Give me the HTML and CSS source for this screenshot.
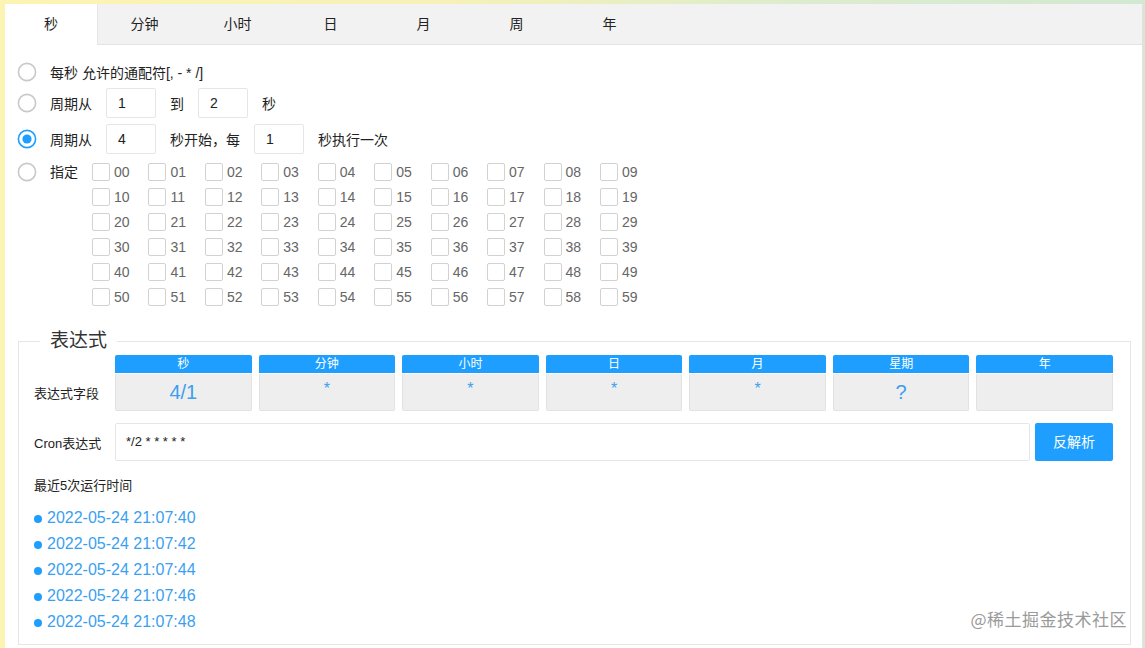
FILE: index.html
```html
<!DOCTYPE html>
<html lang="zh">
<head>
<meta charset="utf-8">
<title>Cron</title>
<link rel="stylesheet" href="styles.css">
</head>
<body>
<div class="panel">
  <ul class="tabs">
    <li class="tab active">秒</li>
    <li class="tab">分钟</li>
    <li class="tab">小时</li>
    <li class="tab">日</li>
    <li class="tab">月</li>
    <li class="tab">周</li>
    <li class="tab">年</li>
  </ul>

  <div class="options">
    <div class="row r1">
      <span class="radio"><svg viewBox="0 0 20 20" width="20" height="20"><circle cx="10" cy="10" r="8.6" fill="#fff" stroke="#c9c9c9" stroke-width="1.6"/></svg></span>
      <span class="txt">每秒 允许的通配符[, - * /]</span>
    </div>
    <div class="row r2">
      <span class="radio"><svg viewBox="0 0 20 20" width="20" height="20"><circle cx="10" cy="10" r="8.6" fill="#fff" stroke="#c9c9c9" stroke-width="1.6"/></svg></span>
      <span class="txt">周期从</span>
      <span class="inp">1</span>
      <span class="txt">到</span>
      <span class="inp">2</span>
      <span class="txt">秒</span>
    </div>
    <div class="row r3">
      <span class="radio"><svg viewBox="0 0 20 20" width="20" height="20"><circle cx="10" cy="10" r="8.6" fill="#fff" stroke="#1e9fff" stroke-width="1.6"/><circle cx="10" cy="10" r="4.6" fill="#1e9fff"/></svg></span>
      <span class="txt">周期从</span>
      <span class="inp">4</span>
      <span class="txt">秒开始，每</span>
      <span class="inp">1</span>
      <span class="txt">秒执行一次</span>
    </div>
    <div class="row r4">
      <span class="radio"><svg viewBox="0 0 20 20" width="20" height="20"><circle cx="10" cy="10" r="8.6" fill="#fff" stroke="#c9c9c9" stroke-width="1.6"/></svg></span>
      <span class="txt spec">指定</span>
      <div class="checks" id="checks"></div>
    </div>
  </div>

  <fieldset class="expr">
    <legend>表达式</legend>
    <div class="fields">
      <div class="flabel">表达式字段</div>
      <div class="col"><div class="ch">秒</div><div class="cv big">4/1</div></div>
      <div class="col"><div class="ch">分钟</div><div class="cv star">*</div></div>
      <div class="col"><div class="ch">小时</div><div class="cv star">*</div></div>
      <div class="col"><div class="ch">日</div><div class="cv star">*</div></div>
      <div class="col"><div class="ch">月</div><div class="cv star">*</div></div>
      <div class="col"><div class="ch">星期</div><div class="cv big">?</div></div>
      <div class="col"><div class="ch">年</div><div class="cv"></div></div>
    </div>
    <div class="cron">
      <div class="flabel">Cron表达式</div>
      <div class="cinput">*/2 * * * * *</div>
      <div class="btn">反解析</div>
    </div>
    <div class="recent">最近5次运行时间</div>
    <ul class="times">
      <li>2022-05-24 21:07:40</li>
      <li>2022-05-24 21:07:42</li>
      <li>2022-05-24 21:07:44</li>
      <li>2022-05-24 21:07:46</li>
      <li>2022-05-24 21:07:48</li>
    </ul>
  </fieldset>
  <div class="watermark">@稀土掘金技术社区</div>
</div>
<script>
  var c = document.getElementById('checks');
  var h = '';
  for (var i = 0; i < 60; i++) {
    var n = (i < 10 ? '0' : '') + i;
    h += '<label class="ck"><span class="box"></span><span class="num">' + n + '</span></label>';
  }
  c.innerHTML = h;
</script>
</body>
</html>
```

FILE: styles.css
```css
* { box-sizing: border-box; }
html, body { margin: 0; padding: 0; height: 100%; }
body {
  background: linear-gradient(90deg, #fcf4b2 0%, #f5f1b8 40%, #dcecce 70%, #d3e8d2 100%);
  font-family: "Liberation Sans", "Noto Sans CJK SC", sans-serif;
  color: #222;
  font-size: 14px;
  overflow: hidden;
}
.panel {
  position: relative;
  margin: 4px 0 0 5px;
  width: 1138px;
  height: 644px;
  background: #fff;
  border-right: 1px solid #e2e2e2;
}
.tabs {
  display: flex;
  margin: 0;
  padding: 0;
  list-style: none;
  height: 41px;
  background: #f2f2f2;
  border-bottom: 1px solid #e4e4e4;
}
.tab {
  width: 93px;
  text-align: center;
  line-height: 40px;
  font-size: 14px;
  color: #222;
}
.tab.active {
  background: #fff;
  height: 41px;
  border-right: 1px solid #e6e6e6;
}
.options { padding: 12px 0 0 12px; }
.row {
  display: flex;
  align-items: center;
  height: 30px;
}
.r2 { margin-top: 1px; }
.r3 { margin-top: 6px; }
.r4 { margin-top: 5px; align-items: flex-start; height: auto; }
.radio {
  width: 20px;
  height: 20px;
  display: flex;
  margin-right: 13px;
}
.r4 .radio { margin-top: 3px; }
.txt { white-space: nowrap; }
.inp {
  width: 50px;
  height: 30px;
  border: 1px solid #e6e6e6;
  border-radius: 2px;
  padding-left: 11px;
  line-height: 28px;
  margin: 0 14px;
  color: #222;
}
.spec { margin-right: 14px; line-height: 26px; }
.checks {
  display: grid;
  grid-template-columns: repeat(10, 56.45px);
  grid-auto-rows: 25px;
}
.ck { display: flex; align-items: center; }
.box {
  width: 18px;
  height: 18px;
  border: 1px solid #d2d2d2;
  border-radius: 2px;
  background: #fff;
  margin-right: 4px;
}
.num { color: #666; font-size: 14px; }

.expr {
  margin: 20px 11px 0 13px;
  border: 1px solid #e6e6e6;
  padding: 2px 17px 10px 15px;
  min-width: 0;
  height: 316px;
}
.expr legend {
  margin-left: 6px;
  padding: 0 10px;
  font-size: 19px;
  color: #333;
  line-height: 24px;
}
.fields {
  display: grid;
  grid-template-columns: 74px repeat(7, 1fr);
  column-gap: 7px;
  align-items: center;
}
.flabel { font-size: 13px; color: #222; padding-top: 18px; white-space: nowrap; }
.col { display: flex; flex-direction: column; }
.ch {
  height: 18px;
  background: #1e9fff;
  color: #fff;
  font-size: 12px;
  text-align: center;
  line-height: 18px;
  border-radius: 2px 2px 0 0;
}
.cv {
  margin-top: 1px;
  height: 37px;
  background: #eeeeee;
  border: 1px solid #e2e2e2;
  border-top: none;
  border-radius: 0 0 2px 2px;
  color: #3b9ff0;
  text-align: center;
}
.cv.big { font-size: 20px; line-height: 36px; }
.cv.star { font-size: 16px; line-height: 30px; }
.cron {
  display: flex;
  align-items: center;
  margin-top: 12px;
}
.cron .flabel { width: 81px; padding-top: 0; }
.cinput {
  flex: 1;
  height: 38px;
  border: 1px solid #e6e6e6;
  border-radius: 2px;
  padding-left: 10px;
  line-height: 36px;
  font-size: 13px;
  color: #222;
}
.btn {
  margin-left: 5px;
  width: 78px;
  height: 38px;
  background: #1e9fff;
  color: #fff;
  border-radius: 2px;
  text-align: center;
  line-height: 38px;
  font-size: 14px;
}
.recent {
  margin-top: 14px;
  font-size: 13px;
  color: #222;
}
.times {
  list-style: none;
  margin: 11px 0 0 0;
  padding: 0;
}
.times li {
  display: flex;
  align-items: center;
  height: 26px;
  font-size: 16px;
  color: #3b9ff0;
}
.times li::before {
  content: "";
  width: 8px;
  height: 8px;
  border-radius: 50%;
  background: #1e9fff;
  margin: 2px 5px 0 0;
}
.watermark {
  position: absolute;
  right: 15px;
  bottom: 17px;
  font-size: 17px;
  color: #9a9a9a;
  font-family: "Noto Sans CJK SC", sans-serif;
  letter-spacing: 0.5px;
}
```
